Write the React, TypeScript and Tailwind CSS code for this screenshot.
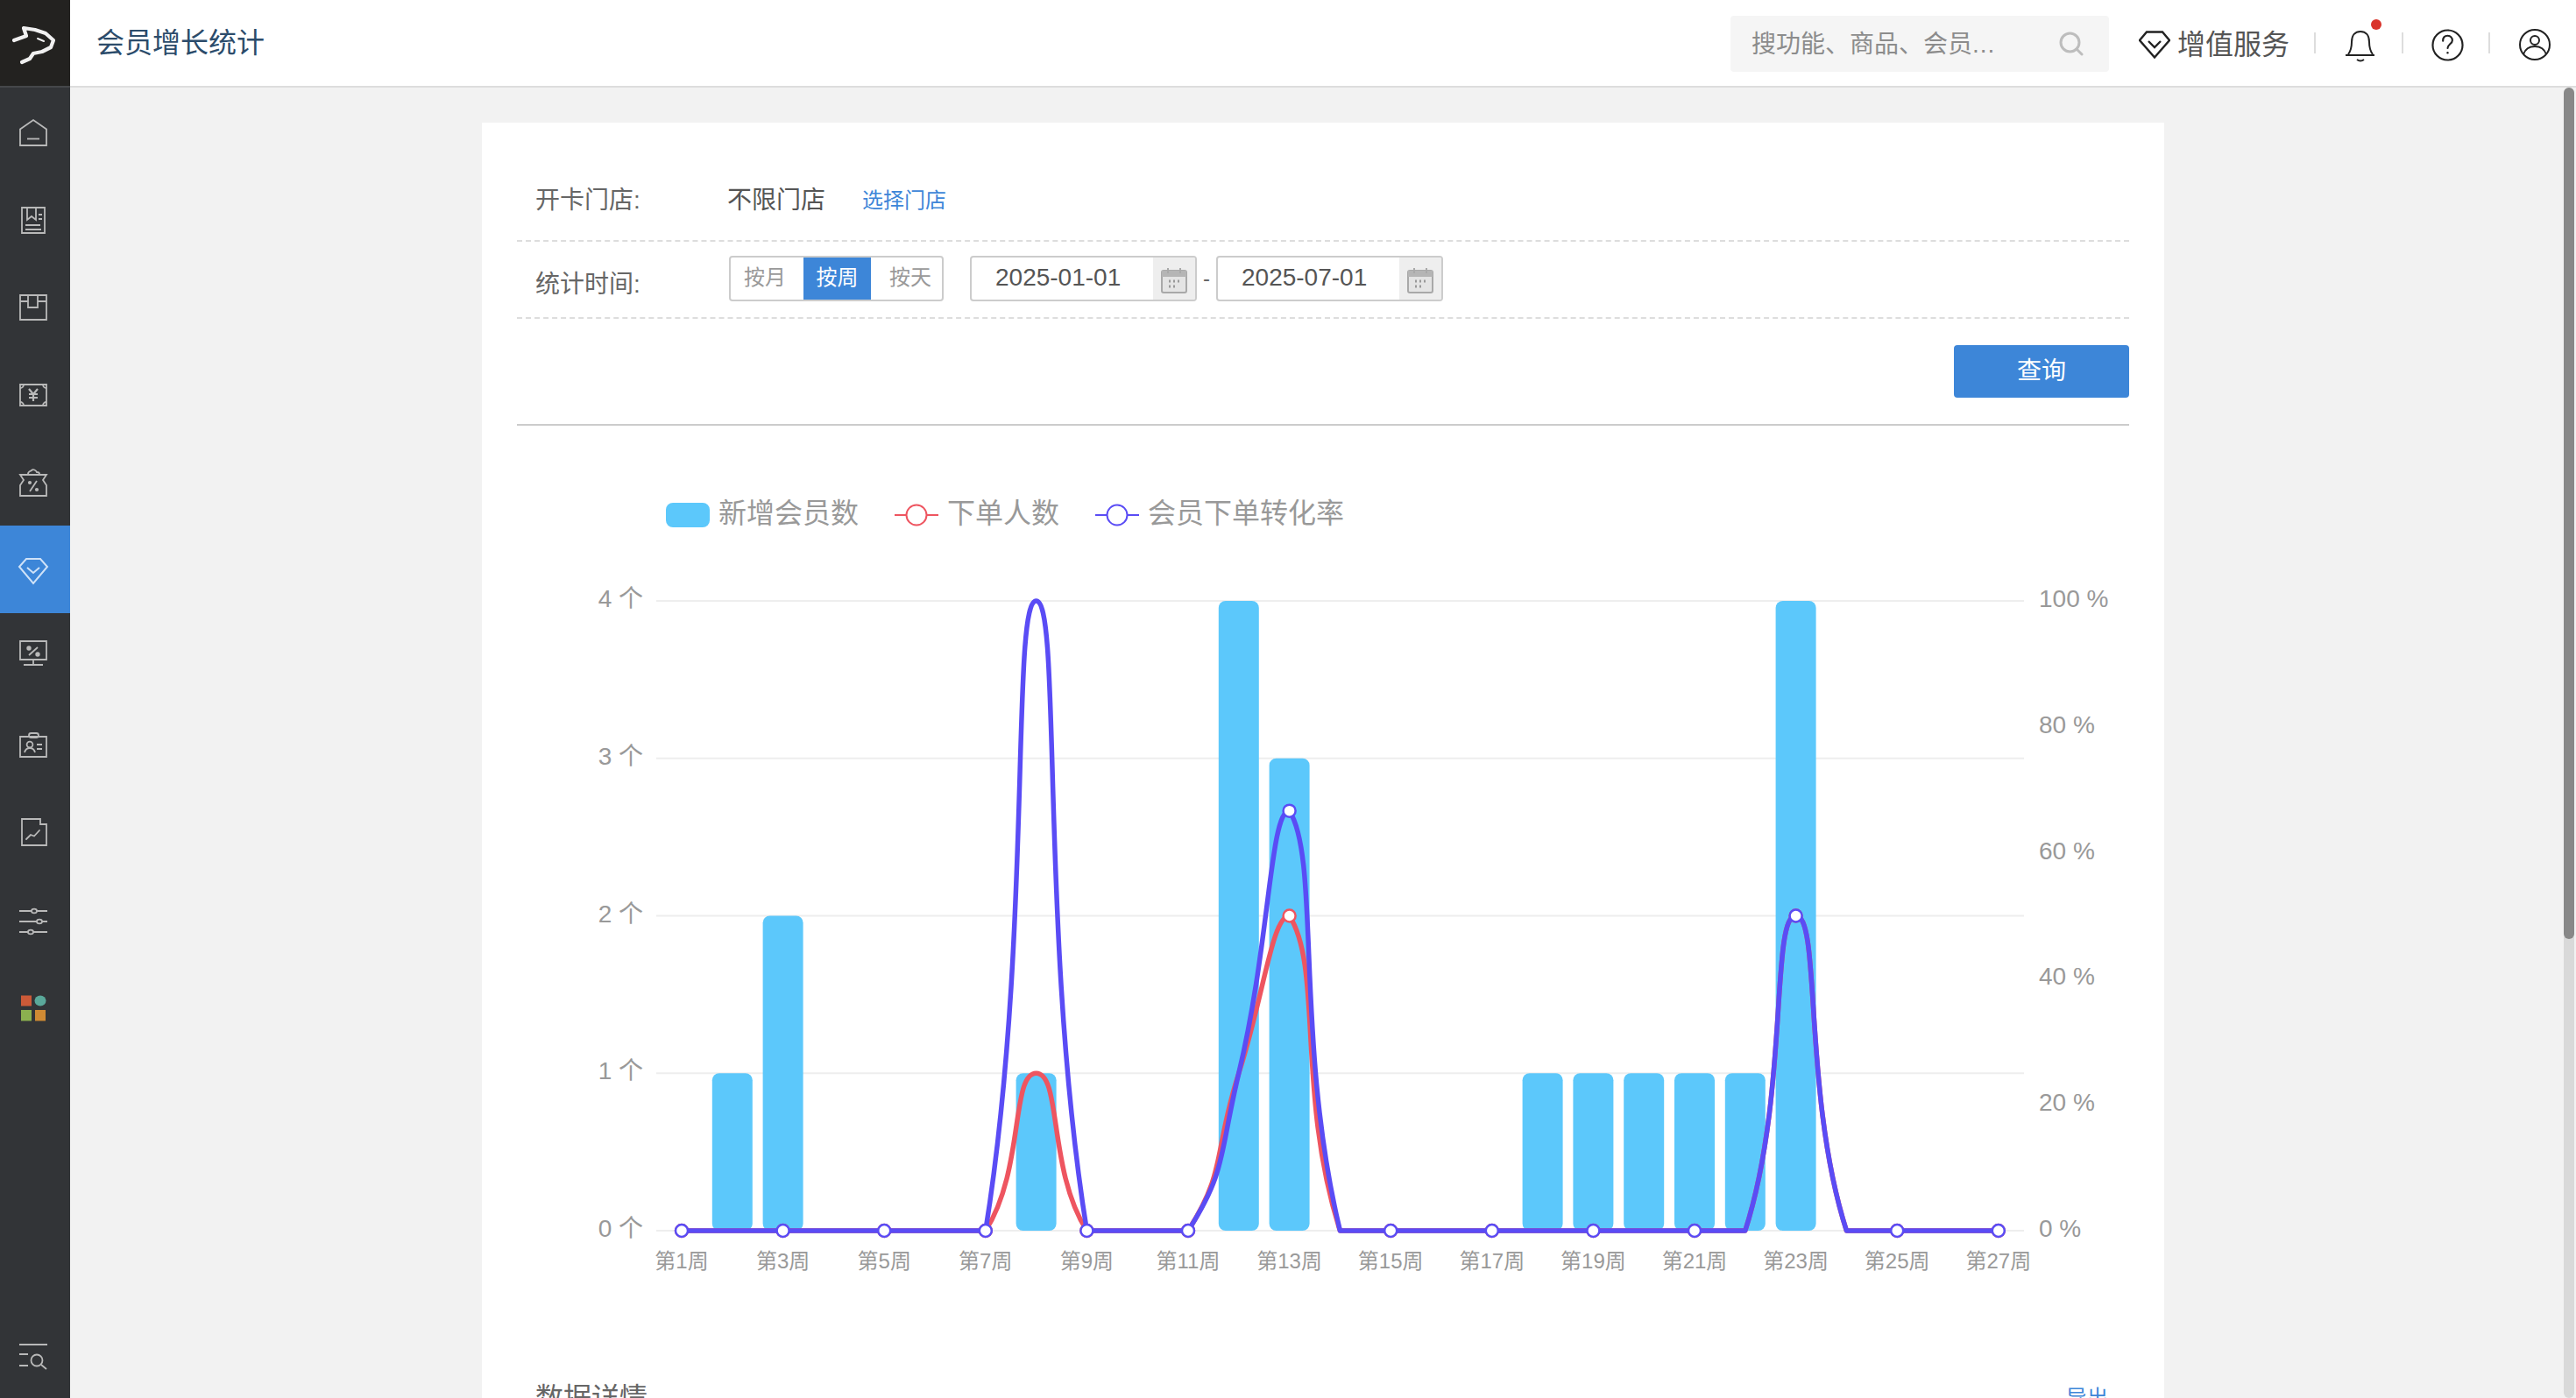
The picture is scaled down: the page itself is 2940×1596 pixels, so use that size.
import React from "react";

type P = [number, number];

const WEEKS = 27;
const wx = (w: number) => 778 + 57.8 * (w - 1);
const leftY = (v: number) => 1406 - v * 179.75;
const rightY = (v: number) => 1406 - v * 7.19;

const bars: Record<number, number> = { 2: 1, 3: 2, 8: 1, 12: 4, 13: 3, 18: 1, 19: 1, 20: 1, 21: 1, 22: 1, 23: 4 };
const red: Record<number, number> = { 8: 1, 12: 1, 13: 2, 23: 2 };
const blue: Record<number, number> = { 8: 100, 12: 25, 13: 66.67, 23: 50 };

function points(data: Record<number, number>, y: (v: number) => number): P[] {
  return Array.from({ length: WEEKS }, (_, i) => [wx(i + 1), y(data[i + 1] ?? 0)] as P);
}

function clamp(v: number, a: number, b: number) {
  return Math.max(Math.min(a, b), Math.min(Math.max(a, b), v));
}

// Smoothed line: control points along (next - prev) * 0.5, split by segment length,
// each one held inside the box of the segment it belongs to
function smoothPath(pts: P[]) {
  const s = 0.5;
  let d = `M${pts[0][0]} ${pts[0][1]}`;
  let cp0x = pts[0][0];
  let cp0y = pts[0][1];
  for (let i = 1; i < pts.length; i++) {
    const [x, y] = pts[i];
    const [px, py] = pts[i - 1];
    const [nx, ny] = pts[i + 1] ?? pts[i];
    const lp = Math.hypot(x - px, y - py);
    const ln = Math.hypot(nx - x, ny - y);
    const vx = (nx - px) * s;
    const vy = (ny - py) * s;
    const r = ln / (ln + lp);
    const cp1x = clamp(x - vx * (1 - r), px, x);
    const cp1y = clamp(y - vy * (1 - r), py, y);
    d += ` C${cp0x.toFixed(2)} ${cp0y.toFixed(2)} ${cp1x.toFixed(2)} ${cp1y.toFixed(2)} ${x.toFixed(2)} ${y.toFixed(2)}`;
    cp0x = clamp(x + vx * r, x, nx);
    cp0y = clamp(y + vy * r, y, ny);
  }
  return d;
}

const C_RED = "#ee5560";
const C_BLUE = "#5a4cf5";
const C_BAR = "#5cc8fb";
const C_AXIS = "#999999";

function Chart() {
  const redPts = points(red, leftY);
  const bluePts = points(blue, rightY);
  const grid = [687, 866.75, 1046.5, 1226.25, 1406];
  const odd = Array.from({ length: 14 }, (_, i) => i * 2 + 1);
  return (
    <svg viewBox="590 487 1840 1044" className="block w-[1840px] h-[1044px]">
      {/* legend */}
      <rect x="760" y="575" width="50" height="28" rx="8" fill={C_BAR} />
      <text x="820" y="587" fontSize="32" fill={C_AXIS} dominantBaseline="central">新增会员数</text>
      <line x1="1021" x2="1071" y1="589" y2="589" stroke={C_RED} strokeWidth="2" />
      <circle cx="1046" cy="589" r="11.5" fill="#fff" stroke={C_RED} strokeWidth="2" />
      <text x="1081" y="587" fontSize="32" fill={C_AXIS} dominantBaseline="central">下单人数</text>
      <line x1="1250" x2="1300" y1="589" y2="589" stroke={C_BLUE} strokeWidth="2" />
      <circle cx="1275" cy="589" r="11.5" fill="#fff" stroke={C_BLUE} strokeWidth="2" />
      <text x="1310" y="587" fontSize="32" fill={C_AXIS} dominantBaseline="central">会员下单转化率</text>

      {/* grid */}
      {grid.map((y) => (
        <line key={y} x1="749" x2="2310" y1={y} y2={y} stroke="#eeeeee" strokeWidth="2" />
      ))}

      {/* left axis */}
      {[0, 1, 2, 3, 4].map((v) => (
        <text key={v} x="734" y={leftY(v) - 2.5} fontSize="28" fill={C_AXIS} textAnchor="end" dominantBaseline="central">
          {v} 个
        </text>
      ))}
      {/* right axis */}
      {[0, 20, 40, 60, 80, 100].map((v) => (
        <text key={v} x="2327" y={rightY(v) - 2.5} fontSize="28" fill={C_AXIS} dominantBaseline="central">
          {v} %
        </text>
      ))}
      {/* x axis */}
      {odd.map((w) => (
        <text key={w} x={wx(w)} y="1440" fontSize="24" fill={C_AXIS} textAnchor="middle" dominantBaseline="central">
          第{w}周
        </text>
      ))}

      {/* bars */}
      {Object.entries(bars).map(([w, v]) => {
        const x = wx(Number(w)) - 23;
        const top = leftY(v);
        return <rect key={w} x={x} y={top} width="46" height={1406 - top} rx="8" fill={C_BAR} />;
      })}

      {/* lines */}
      <path d={smoothPath(redPts)} fill="none" stroke={C_RED} strokeWidth="5.5" strokeLinejoin="round" />
      {odd.map((w) => (
        <circle key={w} cx={wx(w)} cy={redPts[w - 1][1]} r="7" fill="#fff" stroke={C_RED} strokeWidth="2.5" />
      ))}
      <path d={smoothPath(bluePts)} fill="none" stroke={C_BLUE} strokeWidth="5.5" strokeLinejoin="round" />
      {odd.map((w) => (
        <circle key={w} cx={wx(w)} cy={bluePts[w - 1][1]} r="7" fill="#fff" stroke={C_BLUE} strokeWidth="2.5" />
      ))}
    </svg>
  );
}

function NavIcon({ children, color = "#b9b9b9" }: { children: React.ReactNode; color?: string }) {
  return (
    <svg
      viewBox="0 0 32 32"
      className="block w-[32px] h-[32px] overflow-visible"
      fill="none"
      stroke={color}
      strokeWidth="1.8"
      strokeLinejoin="miter"
    >
      {children}
    </svg>
  );
}

const navIcons: React.ReactNode[] = [
  <NavIcon key="home">
    <path d="M1 31V12.5L16 2l15 10.5V31Z" />
    <path d="M9 23.5h14" />
  </NavIcon>,
  <NavIcon key="book">
    <path d="M3 2h26v29H3Z" />
    <path d="M9 2v14l5-4 5 4V2" />
    <path d="M22 10h4M22 15h4M7 22h17M7 27h18" />
  </NavIcon>,
  <NavIcon key="box">
    <path d="M1 2h30v28H1Z" />
    <path d="M1 9h9M21 9h10M10 2v14h11V2" />
  </NavIcon>,
  <NavIcon key="money">
    <path d="M1 4h30v24H1Z" />
    <path d="M5 4a4 4 0 0 1-4 4M27 4a4 4 0 0 0 4 4M1 24a4 4 0 0 1 4 4M31 24a4 4 0 0 0-4 4" />
    <path d="M11 9l5 6 5-6M16 15v8M11 15h10M11 19h10" strokeWidth="2.2" />
  </NavIcon>,
  <NavIcon key="ticket">
    <path d="M1 7h30l-4 6 4 6v12H1V19l4-6Z" />
    <path d="M10 6c0-3 3-3 4-4 2-2 5 0 6 2 2 0 3 1 3 2" />
    <path d="M12 26l8-12" />
    <circle cx="12" cy="16" r="1.2" fill="#b9b9b9" />
    <circle cx="20" cy="24" r="1.2" fill="#b9b9b9" />
  </NavIcon>,
  <NavIcon key="vip" color="#cfe2f8">
    <path d="M8 3h16l8 9-16 19L0 12Z" strokeWidth="2" />
    <path d="M9 13l7 6 7-6" strokeWidth="2" />
  </NavIcon>,
  <NavIcon key="monitor">
    <path d="M1 -3h30v21H1Z" />
    <path d="M16 18v5M5 24h22" />
    <path d="M11 13l10-9" />
    <circle cx="11" cy="5" r="1.8" fill="#b9b9b9" />
    <circle cx="21" cy="12" r="1.8" fill="#b9b9b9" />
  </NavIcon>,
  <NavIcon key="card">
    <path d="M1 6h30v23H1Z" />
    <rect x="11" y="2" width="11" height="5" rx="2.5" />
    <circle cx="12" cy="15" r="3.4" />
    <path d="M6 24c1-4 3-5 6-5s5 1 6 5M20 15h6M20 20h6" />
  </NavIcon>,
  <NavIcon key="folder">
    <path d="M3 0h21v6h7v24H3Z" />
    <path d="M8 23l5-5 4 1.500 6-6.500" strokeLinecap="round" />
  </NavIcon>,
  <NavIcon key="sliders">
    <path d="M0 5h32M0 17h32M0 29h32" />
    <ellipse cx="17" cy="5" rx="3" ry="2.400" fill="#323437" />
    <ellipse cx="23" cy="17" rx="3" ry="2.400" fill="#323437" />
    <ellipse cx="13" cy="29" rx="3" ry="2.400" fill="#323437" />
  </NavIcon>,
  <NavIcon key="apps">
    <rect x="2" y="1.500" width="12" height="12" fill="#cc5a38" stroke="none" />
    <ellipse cx="24" cy="7.500" rx="6.500" ry="6" fill="#5aa89a" stroke="none" />
    <rect x="2" y="18" width="12" height="12.500" fill="#8bb04f" stroke="none" />
    <rect x="18" y="18" width="12" height="12.500" fill="#d08a33" stroke="none" />
  </NavIcon>,
];

function Calendar() {
  return (
    <svg viewBox="0 0 30 30" className="block w-[30px] h-[30px]">
      <rect x="1" y="4" width="28" height="25" rx="2" fill="#e4e4e4" stroke="#a9a9a9" strokeWidth="2" />
      <rect x="1" y="4" width="28" height="7" fill="#b5b5b5" />
      <path d="M8 1v6M22 1v6" stroke="#a9a9a9" strokeWidth="2" />
      <path d="M9 16h2M14 16h2M19 16h2M9 22h2M14 22h2" stroke="#999" strokeWidth="3" />
    </svg>
  );
}

function DateField({ value }: { value: string }) {
  return (
    <div className="flex w-[259px] h-[52px] border-2 border-[#cccccc] rounded-[4px] overflow-hidden">
      <div className="flex-1 pl-[27px] text-[28px] leading-[46px] text-[#555555]">{value}</div>
      <div className="w-[48px] bg-[#eeeeee] flex items-center justify-center pt-[4px]">
        <Calendar />
      </div>
    </div>
  );
}

export default function App() {
  return (
    <div className="relative w-[2940px] h-[1596px] overflow-hidden flex font-['Liberation_Sans','Noto_Sans_CJK_SC',sans-serif] bg-[#f2f2f2]">
      {/* sidebar */}
      <aside className="w-[80px] h-full bg-[#323437] flex flex-col shrink-0">
        <div className="h-[100px] bg-[#232220] border-b-2 border-[#45474a] flex items-center pl-[14px]">
          <svg viewBox="0 0 52 44" className="w-[52px] h-[44px] overflow-visible" fill="none" stroke="#f0f0f0" strokeWidth="4.2" strokeLinejoin="round" strokeLinecap="round">
            <path d="M2 19 L16 14 L13 5 L26 7 L38 11 L47 19 L44 27 L34 32 L24 34 L20 40 L11 44" />
            <path d="M29 17 L36 20" strokeWidth="2" />
          </svg>
        </div>
        {navIcons.map((icon, i) => (
          <div key={i} className={i === 5 ? "h-[100px] flex items-center pl-[22px] pt-[2px] bg-[#3d86d8]" : "h-[100px] flex items-center pl-[22px] pt-[2px]"}>
            {icon}
          </div>
        ))}
        <div className="mt-auto pl-[22px] pb-[31px]">
          <NavIcon>
            <path d="M0 2h32M0 13h10M0 26h10" />
            <circle cx="20" cy="20" r="6.500" />
            <path d="M25 25l6 5" />
          </NavIcon>
        </div>
      </aside>

      {/* main */}
      <div className="flex-1 flex flex-col min-w-0">
        <header className="h-[100px] shrink-0 bg-white border-b-2 border-[#dddddd] flex items-center pl-[30px] pr-[29px]">
          <h1 className="text-[32px] font-normal text-[#2c4c6b]">会员增长统计</h1>
          <div className="ml-auto mt-[2px] w-[432px] h-[64px] rounded-[4px] bg-[#f5f5f5] flex items-center pl-[24px] pr-[29px]">
            <span className="mt-[2px] text-[28px] text-[#8c8c8c] whitespace-nowrap">
              搜功能、商品、会员<span className="tracking-[1px]">...</span>
            </span>
            <svg viewBox="0 0 28 28" className="ml-auto w-[28px] h-[28px]" fill="none" stroke="#bdbdbd" strokeWidth="3">
              <circle cx="12.500" cy="12.500" r="10.500" />
              <path d="M20 20l6 6" strokeLinecap="round" />
            </svg>
          </div>
          <svg viewBox="0 0 36 32" className="ml-[34px] mt-[3px] w-[36px] h-[32px] shrink-0" fill="none" stroke="#222222" strokeWidth="2.400">
            <path d="M9 1.500h18L35 11 18 30.500 1 11Z" />
            <path d="M11 12l7 7 7-7" />
          </svg>
          <span className="ml-[8px] mt-[4px] text-[32px] text-[#555555]">增值服务</span>
          <div className="ml-[28px] w-[2px] h-[24px] bg-[#dddddd]" />
          <div className="relative ml-[34px] mt-[8px] w-[34px] h-[36px]">
            <svg viewBox="0 0 34 36" className="block w-[34px] h-[36px]" fill="none" stroke="#222222" strokeWidth="2">
              <path d="M3 27c3-4 4-7 4-14C7 5 11 1 17 1s10 4 10 12c0 7 1 10 4 14" />
              <path d="M0 28h33" />
              <path d="M13 33q4 3 8 0" />
            </svg>
            <span className="absolute -top-[13px] -right-[7px] w-[12px] h-[12px] rounded-full bg-[#d9342b]" />
          </div>
          <div className="ml-[30px] w-[2px] h-[24px] bg-[#dddddd]" />
          <svg viewBox="0 0 38 38" className="ml-[32px] mt-[4px] w-[37px] h-[37px]" fill="none" stroke="#222222" strokeWidth="2.200">
            <circle cx="19" cy="19" r="17.500" />
            <path d="M13.500 14c0-4 2.500-6 5.500-6s5.500 2 5.500 5.500c0 4-5.500 4.500-5.500 9" strokeLinecap="round" />
            <circle cx="19" cy="28" r="1.200" fill="#222222" stroke="none" />
          </svg>
          <div className="ml-[28px] w-[2px] h-[24px] bg-[#dddddd]" />
          <svg viewBox="0 0 36 36" className="ml-[33px] mt-[4px] w-[36px] h-[36px]" fill="none" stroke="#222222" strokeWidth="2">
            <circle cx="18" cy="18" r="17" />
            <circle cx="18" cy="13" r="5" />
            <path d="M5 29c2-6 7-9 13-9s11 3 13 9" />
          </svg>
        </header>

        <main className="flex-1 min-h-0 pt-[40px] overflow-hidden">
          <section className="w-[1920px] mx-auto bg-white px-[40px] pt-[40px] h-[1600px] text-[28px] text-[#666666]">
            <div className="h-[96px] flex items-center border-b-2 border-dashed border-[#dddddd] pl-[21px] pt-[4px]">
              <span className="w-[219px]">开卡门店:</span>
              <span className="text-[#555555]">不限门店</span>
              <span className="ml-[42px] text-[24px] text-[#3d86d8]">选择门店</span>
            </div>
            <div className="h-[88px] flex items-start border-b-2 border-dashed border-[#dddddd] pl-[21px] pt-[16px]">
              <span className="w-[221px] mt-[13px] leading-[40px]">统计时间:</span>
              <div className="flex w-[245px] h-[52px] border-2 border-[#cccccc] rounded-[4px] text-[24px] text-[#999999] overflow-hidden">
                <span className="w-[83px] pl-[15px] leading-[46px]">按月</span>
                <span className="w-[77px] text-center leading-[46px] bg-[#3d86d8] text-white">按周</span>
                <span className="w-[81px] pl-[21px] leading-[46px]">按天</span>
              </div>
              <div className="ml-[30px]">
                <DateField value="2025-01-01" />
              </div>
              <span className="w-[22px] text-center text-[24px] leading-[52px] text-[#666666]">-</span>
              <DateField value="2025-07-01" />
            </div>
            <div className="flex justify-end py-[30px] border-b-2 border-[#cccccc]">
              <button className="w-[200px] h-[60px] rounded-[4px] bg-[#3d86d8] text-white text-[28px]">查询</button>
            </div>
            <Chart />
            <div className="flex justify-between items-center pt-[46px] pl-[21px] pr-[24px] leading-[40px]">
              <span className="text-[32px] text-[#666666]">数据详情</span>
              <span className="text-[24px] text-[#3d86d8]">导出</span>
            </div>
          </section>
        </main>
      </div>

      {/* overlay scrollbar */}
      <div className="absolute right-[2px] top-[100px] bottom-0 w-[12px] rounded-[6px] bg-[#d9d9d9]">
        <div className="h-[972px] rounded-[6px] bg-[#888888]" />
      </div>
    </div>
  );
}
